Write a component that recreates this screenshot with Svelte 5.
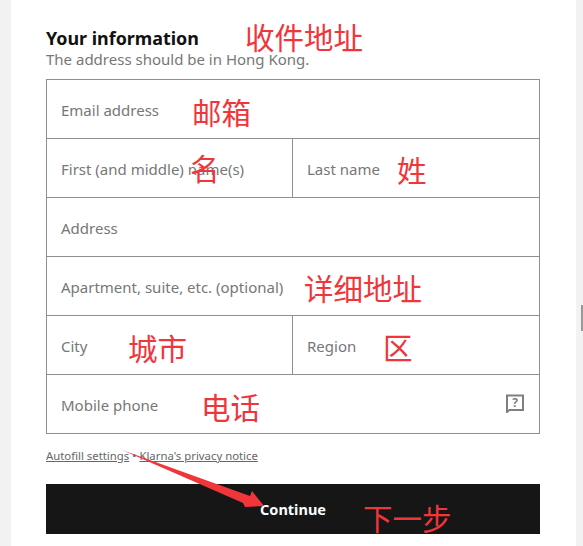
<script lang="ts">
    const rows = [
        [{ label: "Email address" }],
        [{ label: "First (and middle) name(s)" }, { label: "Last name" }],
        [{ label: "Address" }],
        [{ label: "Apartment, suite, etc. (optional)" }],
        [{ label: "City" }, { label: "Region" }],
        [{ label: "Mobile phone", help: true }],
    ];

    // red notes drawn over the screenshot
    const notes = [
        { text: "收件地址", x: 245, y: 18 },
        { text: "邮箱", x: 192, y: 93 },
        { text: "名", x: 190, y: 149 },
        { text: "姓", x: 397, y: 151 },
        { text: "详细地址", x: 304, y: 269 },
        { text: "城市", x: 128, y: 329 },
        { text: "区", x: 383, y: 328 },
        { text: "电话", x: 201, y: 388 },
        { text: "下一步", x: 363, y: 499 },
    ];
</script>

<div class="page">
    <main class="sheet">
        <h2>Your information</h2>
        <p class="sub">The address should be in Hong Kong.</p>

        <div class="fields">
            {#each rows as row}
                <div class="row">
                    {#each row as field}
                        <div class="field">
                            <span>{field.label}</span>
                            {#if field.help}
                                <svg class="help" width="18" height="19" viewBox="0 0 18 19">
                                    <path d="M1 1.5h16v14.5H3.5L1 18z" fill="none" stroke="#7f7f7f" stroke-width="2" />
                                    <text x="9" y="13" text-anchor="middle">?</text>
                                </svg>
                            {/if}
                        </div>
                    {/each}
                </div>
            {/each}
        </div>

        <p class="links"><u>Autofill settings</u> • <u>Klarna's privacy notice</u></p>

        <button>Continue</button>
    </main>
</div>

{#each notes as note}
    <span class="note" style="left: {note.x}px; top: {note.y}px">{note.text}</span>
{/each}

<svg class="arrow" width="583" height="546" viewBox="0 0 583 546">
    <path d="M122 450 L250 496 L252 491 L264 506 L245 507 L243 503 Z" fill="#f0353b" />
</svg>
<div class="thumb"></div>

<style>
    :global(body) {
        margin: 0;
        overflow: hidden;
        font-family: "Noto Sans", "Open Sans", sans-serif;
    }
    .page {
        height: 546px;
        background: #f2f2f2;
        padding: 0 7px 0 11px;
        overflow: hidden;
    }
    .sheet {
        background: #fff;
        height: 100%;
        padding: 28px 36px 0 35px;
        box-sizing: border-box;
    }
    h2 {
        margin: 0;
        font-size: 17.9px;
        line-height: 21px;
        font-weight: 700;
        color: #111;
    }
    .sub {
        margin: 0 0 10px;
        font-size: 15px;
        line-height: 20px;
        color: #777;
    }
    .fields {
        border: 1px solid #8f8f8f;
        border-bottom: 0;
    }
    .row {
        display: flex;
        height: 59px;
        box-sizing: border-box;
        border-bottom: 1px solid #8f8f8f;
    }
    .field {
        flex: 1 1 0;
        box-sizing: border-box;
        display: flex;
        align-items: center;
        justify-content: space-between;
        padding: 1px 14px 0;
        font-size: 15px;
        color: #777;
    }
    .field:first-child:not(:last-child) {
        flex: 0 0 245px;
    }
    .field + .field {
        border-left: 1px solid #8f8f8f;
    }
    .help {
        margin-right: 1px;
        margin-top: -2px;
    }
    .help text {
        font-size: 12px;
        font-weight: 700;
        fill: #7f7f7f;
    }
    .links {
        margin: 14px 0 20px;
        font-size: 11.35px;
        line-height: 16px;
        color: #666;
    }
    button {
        display: block;
        width: 494px;
        height: 50px;
        border: 0;
        background: #161616;
        color: #fff;
        font: 700 14.5px "Noto Sans", sans-serif;
    }
    .note {
        position: absolute;
        font-family: "Noto Sans CJK SC", sans-serif;
        font-size: 29.5px;
        line-height: 36px;
        color: #f0353b;
        white-space: nowrap;
    }
    .arrow {
        position: absolute;
        left: 0;
        top: 0;
    }
    .thumb {
        position: absolute;
        left: 581px;
        top: 305px;
        width: 2px;
        height: 26px;
        background: #999;
    }
</style>
